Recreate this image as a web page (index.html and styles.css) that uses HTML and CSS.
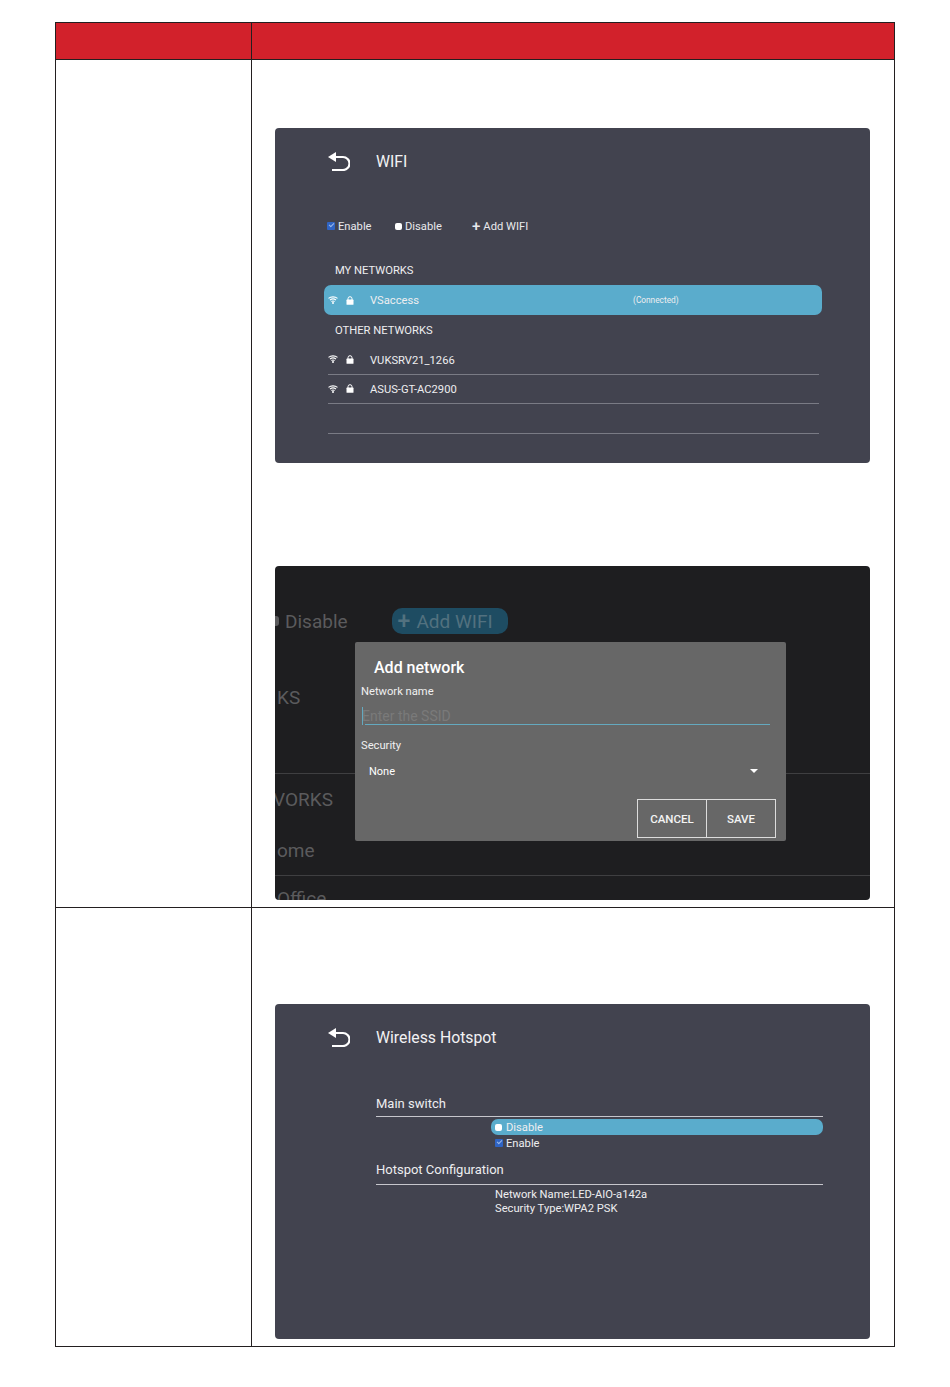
FILE: index.html
```html
<!DOCTYPE html>
<html lang="en">
<head>
  <meta charset="UTF-8" />
  <title>WIFI and Wireless Hotspot</title>
  <link rel="stylesheet" href="styles.css">
</head>
<body>

  <svg class="defs" width="0" height="0">
    <symbol id="back" viewBox="0 0 22 19">
      <polygon points="0,5 8,0 8,10" fill="#fff" />
      <path d="M6 5H15a6.5 6.5 0 0 1 0 13H4" fill="none" stroke="#fff" stroke-width="2.200" />
    </symbol>
    <symbol id="wifi" viewBox="0 0 10 8">
      <path d="M0.5 2.4C3 0.3 7 0.3 9.500 2.400M2 4C3.800 2.700 6.200 2.700 8 4M3.400 5.500C4.400 4.900 5.600 4.900 6.600 5.500" fill="none" stroke="#fff" stroke-width="1.100" />
      <circle cx="5" cy="7" r="1" fill="#fff" />
    </symbol>
    <symbol id="lock" viewBox="0 0 8 9">
      <path d="M2 4V2.700a2 2 0 0 1 4 0V4" fill="none" stroke="#fff" stroke-width="1" />
      <rect x="0.500" y="3.600" width="7" height="5.200" rx="0.600" fill="#fff" />
    </symbol>
  </svg>

  <div class="sheet">
    <div class="cell head"></div>
    <div class="cell head"></div>

    <div class="cell"></div>
    <div class="cell wifi-cell">
      <!-- WIFI list -->
      <div class="screen">
        <div class="top">
          <svg class="back"><use href="#back" /></svg>
          <span class="title">WIFI</span>
        </div>
        <div class="toolbar">
          <span class="opt enable-opt"><i class="check"></i>Enable</span>
          <span class="opt disable-opt"><i class="dot"></i>Disable</span>
          <span class="opt"><b class="plus">+</b>Add WIFI</span>
        </div>
        <div class="group-name first">MY NETWORKS</div>
        <div class="net selected">
          <svg class="wifi"><use href="#wifi" /></svg>
          <svg class="lock"><use href="#lock" /></svg>
          <span class="net-name">VSaccess</span>
          <span class="status">(Connected)</span>
        </div>
        <div class="group-name">OTHER NETWORKS</div>
        <div class="net">
          <svg class="wifi"><use href="#wifi" /></svg>
          <svg class="lock"><use href="#lock" /></svg>
          <span class="net-name">VUKSRV21_1266</span>
        </div>
        <div class="net">
          <svg class="wifi"><use href="#wifi" /></svg>
          <svg class="lock"><use href="#lock" /></svg>
          <span class="net-name">ASUS-GT-AC2900</span>
        </div>
        <div class="net"></div>
      </div>

      <!-- Add network dialog over the dimmed list -->
      <div class="screen dim">
        <div class="dim-bar">
          <i class="dim-dot"></i>
          <span class="dim-text">Disable</span>
          <span class="pill"><b>+</b>Add WIFI</span>
        </div>
        <div class="dim-text dim-ks">KS</div>
        <div class="dim-rule"></div>
        <div class="dim-text dim-works">VORKS</div>
        <div class="dim-text dim-home">ome</div>
        <div class="dim-rule dim-rule2"></div>
        <div class="dim-text dim-office">Office</div>

        <div class="dialog">
          <div class="dialog-title">Add network</div>
          <div class="field-label">Network name</div>
          <div class="ssid"><i class="caret"></i>Enter the SSID</div>
          <div class="field-label security">Security</div>
          <div class="select">
            <span>None</span>
            <i class="arrow"></i>
          </div>
          <div class="actions">
            <button>CANCEL</button>
            <button>SAVE</button>
          </div>
        </div>
      </div>
    </div>

    <div class="cell"></div>
    <div class="cell hotspot-cell">
      <div class="screen">
        <div class="top">
          <svg class="back"><use href="#back" /></svg>
          <span class="title">Wireless Hotspot</span>
        </div>
        <div class="hotspot">
          <div class="section-name">Main switch</div>
          <div class="choice on"><i class="dot"></i>Disable</div>
          <div class="choice"><i class="check"></i>Enable</div>
          <div class="section-name second">Hotspot Configuration</div>
          <div class="info">Network Name:LED-AIO-a142a<br>Security Type:WPA2 PSK</div>
        </div>
      </div>
    </div>
  </div>

</body>
</html>
```

FILE: styles.css
```css
body {
  margin: 0;
  background: #fff;
  font-family: Roboto, sans-serif;
  color: #fff;
}

.defs {
  display: block;
}

.sheet {
  box-sizing: border-box;
  width: 840px;
  margin: 22px 0 0 55px;
  display: grid;
  grid-template-columns: 196px 643px;
  grid-template-rows: 37px 848px 439px;
  border-top: 1px solid #231f20;
  border-left: 1px solid #231f20;
}

.cell {
  box-sizing: border-box;
  border-right: 1px solid #231f20;
  border-bottom: 1px solid #231f20;
}

.head {
  background: #d2212b;
}

.wifi-cell {
  padding: 68px 0 0 23px;
}

.hotspot-cell {
  padding: 96px 0 0 23px;
}

.screen {
  box-sizing: border-box;
  position: relative;
  width: 595px;
  height: 335px;
  padding: 0 48px 0 49px;
  background: #42434f;
  border-radius: 4px;
  overflow: hidden;
}

.top {
  display: flex;
  align-items: center;
  height: 19px;
  padding: 24px 0 0 4px;
}

.back {
  width: 22px;
  height: 19px;
}

.title {
  margin-left: 26px;
  font-size: 15.800px;
  color: #f2f2f4;
}

/* WIFI list */
.toolbar {
  display: flex;
  align-items: center;
  height: 14px;
  margin-top: 48px;
  padding-left: 3px;
  font-size: 11.200px;
  color: #e8e8ec;
}

.opt {
  display: flex;
  align-items: center;
}

.enable-opt {
  width: 68px;
}

.disable-opt {
  width: 77px;
}

.check {
  display: inline-block;
  position: relative;
  box-sizing: border-box;
  width: 8px;
  height: 8px;
  margin-right: 3px;
  background: #2f64c4;
  border-radius: 1px;
}

.check::after {
  content: "";
  position: absolute;
  left: 1.500px;
  top: 1px;
  width: 4px;
  height: 2px;
  border-left: 1px solid #9db9e8;
  border-bottom: 1px solid #9db9e8;
  transform: rotate(-45deg);
}

.dot {
  display: inline-block;
  width: 7px;
  height: 7px;
  margin-right: 3px;
  background: #fff;
  border-radius: 2px;
}

.plus {
  margin-right: 3px;
  font-size: 15px;
  font-weight: 500;
  line-height: 14px;
}

.group-name {
  height: 30px;
  padding-left: 11px;
  font-size: 11.200px;
  line-height: 32px;
  color: #eeeef0;
}

.group-name.first {
  height: 26px;
  margin-top: 26px;
  line-height: 24px;
}

.net {
  box-sizing: border-box;
  display: flex;
  align-items: center;
  width: 491px;
  height: 29.500px;
  margin-left: 4px;
  border-bottom: 1px solid #7a7b85;
  font-size: 11.200px;
  color: #eeeef0;
}

.net.selected {
  width: 498px;
  height: 30px;
  margin-left: 0;
  padding-left: 4px;
  background: #5aaccc;
  border: 0;
  border-radius: 7px;
}

.wifi {
  width: 10px;
  height: 8px;
}

.lock {
  width: 8px;
  height: 9px;
  margin-left: 8px;
}

.net-name {
  margin-left: 16px;
  padding-top: 2px;
}

.selected .net-name {
  padding-top: 0;
}

.status {
  margin-left: 214px;
  font-size: 8.300px;
}

/* dimmed list behind the dialog */
.dim {
  height: 334px;
  margin-top: 103px;
  padding: 0;
  background: #1e1e20;
}

.dim-text {
  height: 24px;
  font-size: 19px;
  line-height: 26px;
  color: #5b5b5d;
}

.dim-bar {
  display: flex;
  align-items: center;
  height: 26px;
  padding-top: 42px;
}

.dim-dot {
  width: 4px;
  height: 10px;
  background: #5b5b5d;
  border-radius: 0 3px 3px 0;
}

.dim-bar .dim-text {
  margin-left: 6px;
}

.pill {
  display: flex;
  align-items: center;
  box-sizing: border-box;
  width: 116px;
  height: 26px;
  margin-left: 44px;
  padding-left: 6px;
  background: #1e4c62;
  border-radius: 10px;
  font-size: 19px;
  color: #52717f;
}

.pill b {
  margin-right: 6px;
  font-size: 23px;
  font-weight: 500;
}

.dim-ks {
  margin: 51px 0 0 2px;
}

.dim-rule {
  height: 1px;
  margin-top: 64px;
  background: #3f3f41;
}

.dim-works {
  margin: 13px 0 0 -2px;
}

.dim-home {
  margin-top: 27px;
  padding-left: 2px;
}

.dim-rule2 {
  margin-top: 13px;
}

.dim-office {
  margin-top: 10px;
  padding-left: 2px;
}

.dialog {
  box-sizing: border-box;
  position: absolute;
  left: 80px;
  top: 76px;
  width: 431px;
  height: 199px;
  padding: 15px 10px 0 6px;
  background: #676767;
  border-radius: 2px;
}

.dialog-title {
  margin-left: 13px;
  font-size: 16px;
  font-weight: 500;
  line-height: 22px;
}

.field-label {
  height: 14px;
  margin-top: 5px;
  font-size: 11.200px;
  line-height: 16px;
  color: #f0f0f0;
}

.ssid {
  position: relative;
  width: 405px;
  height: 20px;
  margin: 6px 0 0 4px;
  border-bottom: 1px solid #64a9bf;
  font-size: 14px;
  line-height: 24px;
  color: #7a7a7a;
  text-indent: -3px;
}

.caret {
  position: absolute;
  left: -3px;
  top: 3px;
  width: 1px;
  height: 18px;
  background: #64a9bf;
}

.security {
  margin-top: 13px;
}

.select {
  display: flex;
  align-items: center;
  justify-content: space-between;
  width: 389px;
  height: 14px;
  margin: 12px 0 0 8px;
  font-size: 11px;
}

.arrow {
  width: 0;
  height: 0;
  border-left: 4px solid transparent;
  border-right: 4px solid transparent;
  border-top: 4px solid #fff;
}

.actions {
  display: flex;
  justify-content: flex-end;
  margin-top: 21px;
}

button {
  box-sizing: border-box;
  width: 70px;
  height: 39px;
  padding: 0;
  background: transparent;
  border: 1px solid #dcdcdc;
  font-family: Roboto, sans-serif;
  font-size: 11.500px;
  font-weight: 500;
  color: #f4f4f4;
}

button + button {
  margin-left: -1px;
}

/* hotspot */
.hotspot {
  width: 447px;
  margin: 47px 0 0 52px;
}

.section-name {
  box-sizing: border-box;
  height: 23px;
  border-bottom: 1px solid #c6c6cc;
  font-size: 13px;
  line-height: 20px;
  color: #eeeef0;
}

.section-name.second {
  height: 23px;
  margin-top: 11px;
  line-height: 16px;
}

.choice {
  display: flex;
  align-items: center;
  height: 16px;
  padding-left: 119px;
  font-size: 11.200px;
  color: #eeeef0;
}

.choice .check {
  margin-right: 3px;
}

.choice.on {
  height: 16px;
  margin: 2px 0 0 115px;
  padding-left: 4px;
  background: #5aaccc;
  border-radius: 7px;
}

.choice.on .dot {
  margin-right: 4px;
}

.info {
  margin: 3px 0 0 119px;
  font-size: 11.200px;
  line-height: 14px;
  color: #eeeef0;
}
```
